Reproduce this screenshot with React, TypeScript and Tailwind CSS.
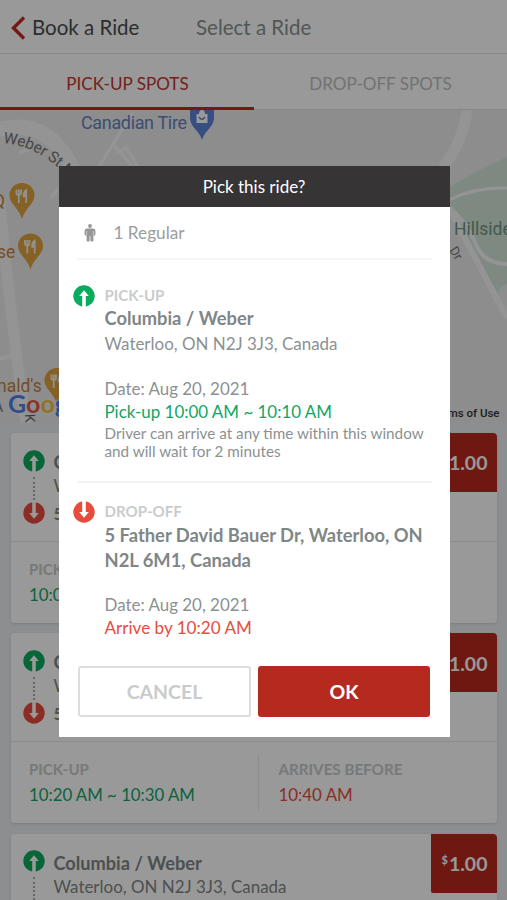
import { ReactNode } from 'react';

interface Ride {
  id: number;
  pickup: string;
  arrival: string;
  price: string;
}

const rides: Ride[] = [
  { id: 1, pickup: '10:00 AM ~ 10:10 AM', arrival: '10:20 AM', price: '1.00' },
  { id: 2, pickup: '10:20 AM ~ 10:30 AM', arrival: '10:40 AM', price: '1.00' },
  { id: 3, pickup: '10:40 AM ~ 10:50 AM', arrival: '11:00 AM', price: '1.00' },
];

function UpIcon() {
  return (
    <svg className="w-[22px] h-[22px] block shrink-0" viewBox="0 0 22 22">
      <circle cx="11" cy="11" r="10.7" fill="#0aab5c" />
      <path d="M11 5.2 L15.8 11 H12.8 V22 H9.2 V11 H6.2 Z" fill="#fff" />
    </svg>
  );
}

function DownIcon() {
  return (
    <svg className="w-[22px] h-[22px] block shrink-0" viewBox="0 0 22 22">
      <circle cx="11" cy="11" r="10.7" fill="#e84c3d" />
      <path d="M11 16.8 L6.2 11 H9.2 V0 H12.8 V11 H15.8 Z" fill="#fff" />
    </svg>
  );
}

function PersonIcon() {
  return (
    <svg className="w-[12px] h-[18px] block" viewBox="0 0 12 18">
      <circle cx="6" cy="2" r="1.9" fill="#969696" />
      <path d="M3.2 4.4 H8.8 Q11.4 4.4 11.4 7 V10.4 Q11.4 11.4 10.3 11.4 H9.4 V16.6 Q9.4 17.7 8 17.7 T6.4 16.6 V12 H5.6 V16.6 Q5.6 17.7 4.2 17.7 T2.6 16.6 V11.4 H1.7 Q.6 11.4 .6 10.4 V7 Q.6 4.4 3.2 4.4 Z" fill="#969696" />
      <path d="M2.7 7 V11.2 M9.3 7 V11.2" stroke="#fff" strokeWidth=".5" />
    </svg>
  );
}

function FoodPin({ x, y }: { x: number; y: number }) {
  return (
    <g transform={`translate(${x} ${y})`}>
      <path d="M0 36 C-3 25 -12.5 21 -12.5 12.2 A12.5 12.2 0 0 1 12.5 12.2 C12.5 21 3 25 0 36 Z" fill="#dea23f" />
      <path d="M-5.5 6.5 V10.5 Q-5.5 12 -3.2 12 T-1 10.5 V6.5 M-3.2 6.5 V20" stroke="#f4f0e8" strokeWidth="1.8" fill="none" />
      <path d="M4.2 20 V7 Q1.6 8 1.6 13.4 H4.2" stroke="#f4f0e8" strokeWidth="1.7" fill="#f4f0e8" />
    </g>
  );
}

function RideMap() {
  return (
    <svg className="w-full h-[313px] block" viewBox="0 110 507 313" fontFamily="Roboto, sans-serif">
      <rect y="110" width="507" height="313" fill="#ebebeb" />
      <path d="M449 187 Q476 171 507 157 V320 Q490 287 480 263 L449 215 Z" fill="#d3e7d8" />
      <path d="M492 303 Q497 290 507 283 V324 Z" fill="#ebebeb" />
      <g fill="none" stroke="#f7f7f7">
        <path d="M-4 130 Q34 120 57 145 Q74 163 86 202" strokeWidth="15" />
        <path d="M0 200 Q7 290 26 424" strokeWidth="11" />
        <path d="M0 359 L18 354" strokeWidth="4" />
        <path d="M133 112 L98 168 M112 143 L134 168 M116 153 L126 148 L139 168" strokeWidth="3.5" />
        <path d="M467 110 Q465 136 443 168" strokeWidth="11" />
        <path d="M449 200 Q474 187 507 188" strokeWidth="3" />
        <path d="M449 208 L507 318" strokeWidth="6" />
        <path d="M449 207 Q466 222 474 240 Q482 264 507 264" strokeWidth="4" />
        <path d="M19 153 L29 149 M51 198 L58 189" strokeWidth="4" />
      </g>
      <path id="weber" d="M3 143 Q42 146 72 182" fill="none" />
      <text fontSize="15.5" fill="#747474" letterSpacing="-.15">
        <textPath href="#weber">Weber St N</textPath>
      </text>
      <text x="81" y="128.5" fontSize="18" fill="#6683c0" textLength="106">Canadian Tire</text>
      <path d="M202 140 C199 130 190 127 190 118 V108 H214 V118 C214 127 205 130 202 140 Z" fill="#5b84d6" />
      <path d="M196.5 114 H207.5 V123 H196.5 Z M199 114 Q199 110 202 110 T205 114" fill="#fff" />
      <path d="M199 117 Q202 121.5 205 117" stroke="#5b84d6" fill="none" strokeWidth="1.4" />
      <g fill="#c4823f" fontSize="17.5">
        <text x="-7" y="207">Q</text>
        <text x="-3" y="258">se</text>
        <text x="-3" y="392">nald's</text>
      </g>
      <FoodPin x={22} y={183} />
      <FoodPin x={30.5} y={233.5} />
      <FoodPin x={57} y={368} />
      <text x="454" y="235" fontSize="17.5" fill="#6f9581">Hillside</text>
      <text x="449" y="250" fontSize="13" fill="#777" transform="rotate(58 449 250)">Dr</text>
      <text x="-6" y="412" fontSize="14" fill="#777">A</text>
      <text x="25" y="414" fontSize="14" fill="#666" transform="rotate(88 25 414)">K</text>
      <text x="8" y="413" fontSize="25" fontFamily="Lato, sans-serif" fontWeight="700" strokeWidth="1.5" stroke="#f5f5f5" paintOrder="stroke">
        <tspan fill="#4f82e8">G</tspan>
        <tspan fill="#e2574c">o</tspan>
        <tspan fill="#f2bd42">o</tspan>
        <tspan fill="#4f82e8">g</tspan>
        <tspan fill="#58a65c">l</tspan>
        <tspan fill="#e2574c">e</tspan>
      </text>
      <text x="499.5" y="417" textAnchor="end" fontSize="11.5" fill="#333" fontWeight="500">Terms of Use</text>
    </svg>
  );
}

function RideCard({ ride }: { ride: Ride }) {
  return (
    <div className="h-[190px] shrink-0 bg-white rounded-[3px] shadow-sm">
      <div className="h-[109px] flex border-b border-[#e6e9eb]">
        <div className="w-[43px] pl-[12px] pt-[16.5px]">
          <UpIcon />
          <div className="ml-[10px] mt-[5px] mb-[2px] h-[23px] border-l-2 border-dotted border-[#a8a8a8]" />
          <DownIcon />
        </div>
        <div className="flex-1 pt-[17px] text-[#7f8686]">
          <div className="text-[18.2px] leading-[24px] font-bold whitespace-nowrap">Columbia / Weber</div>
          <div className="text-[16.95px] leading-[24px] whitespace-nowrap">Waterloo, ON N2J 3J3, Canada</div>
          <div className="mt-[4px] text-[16.95px] leading-[24px] font-bold whitespace-nowrap">5 Father David Bauer Dr</div>
        </div>
        <div className="w-[66px] h-[59px] pt-px bg-[#b9291f] rounded-tr-[4px] rounded-bl-[2px] flex items-center justify-center pl-[2px] text-white font-bold">
          <span className="text-[11px] mb-[8px] mr-px">$</span>
          <span className="text-[19.5px]">{ride.price}</span>
        </div>
      </div>
      <div className="h-[81px] flex items-center">
        <div className="w-[248px] h-[54px] pl-[18.5px] pb-px border-r border-[#e6e9eb] flex flex-col justify-center">
          <div className="text-[15.1px] leading-[25px] font-bold text-[#c6caca]">PICK-UP</div>
          <div className="text-[16.8px] leading-[25px] text-[#12a566]">{ride.pickup}</div>
        </div>
        <div className="h-[54px] pl-[20px] pb-px flex flex-col justify-center">
          <div className="text-[15.2px] leading-[25px] font-bold text-[#c6caca]">ARRIVES BEFORE</div>
          <div className="text-[16.9px] leading-[25px] text-[#e84c3d]">{ride.arrival}</div>
        </div>
      </div>
    </div>
  );
}

function Stop({ icon, label, children }: { icon: ReactNode; label: string; children: ReactNode }) {
  return (
    <div className="flex">
      <div className="w-[31.5px] shrink-0">{icon}</div>
      <div className="flex-1 whitespace-nowrap">
        <div className="text-[15.1px] leading-[20px] font-bold text-[#c9cccd]">{label}</div>
        {children}
      </div>
    </div>
  );
}

function ConfirmDialog() {
  return (
    <div className="ml-px w-[391px] h-[571px] bg-white flex flex-col">
      <div className="h-[41px] pt-px bg-[#373435] text-white text-[17px] flex items-center justify-center">Pick this ride?</div>
      <div className="h-[53px] mx-[18px] border-b-2 border-[#f5f6f6] flex items-center pl-[7.5px]">
        <PersonIcon />
        <span className="ml-[17.5px] mt-px text-[17.2px] text-[#9a9d9e]">1 Regular</span>
      </div>

      <div className="h-[223px] mx-[18px] border-b-2 border-[#f1f4f5] pt-[24.5px] text-[16.95px] text-[#8b9192]">
        <div className="-ml-[3.5px]">
          <Stop icon={<UpIcon />} label="PICK-UP">
            <div className="text-[18.3px] leading-[26px] font-bold text-[#7f8686]">Columbia / Weber</div>
            <div className="leading-[26px]">Waterloo, ON N2J 3J3, Canada</div>
            <div className="mt-[20.5px] leading-[23px]">Date: Aug 20, 2021</div>
            <div className="leading-[23px] text-[#12a566]">Pick-up 10:00 AM ~ 10:10 AM</div>
            <div className="mt-[0.5px] text-[15.25px] leading-[18.5px]">
              Driver can arrive at any time within this window<br />and will wait for 2 minutes
            </div>
          </Stop>
        </div>
      </div>

      <div className="h-[183px] mx-[18px] pt-[17.5px] text-[16.95px] text-[#8b9192]">
        <div className="-ml-[3.5px]">
          <Stop icon={<DownIcon />} label="DROP-OFF">
            <div className="mt-[2px] text-[18.35px] leading-[25px] font-bold text-[#7f8686]">
              5 Father David Bauer Dr, Waterloo, ON<br />N2L 6M1, Canada
            </div>
            <div className="mt-[20px] leading-[23px]">Date: Aug 20, 2021</div>
            <div className="leading-[23px] text-[17.1px] text-[#e84c3d]">Arrive by 10:20 AM</div>
          </Stop>
        </div>
      </div>

      <div className="flex justify-between pl-[19.5px] pr-[19.5px]">
        <button className="w-[173px] h-[51px] border-2 border-[#dcdede] rounded-[3px] text-[19.5px] font-bold text-[#c9cccd]">CANCEL</button>
        <button className="w-[172px] h-[51px] bg-[#b6291e] rounded-[3px] text-[19.5px] font-bold text-white">OK</button>
      </div>
    </div>
  );
}

export default function App() {
  return (
    <div className="relative w-[507px] h-[900px] overflow-hidden bg-[#e9edf0] font-['Lato',sans-serif]">
      {/* Header */}
      <div className="h-[54px] pt-[2px] bg-white border-b border-[#dfe2e3] flex items-center">
        <svg className="w-[16px] h-[26px] ml-[10px]" viewBox="0 0 16 26" fill="none">
          <path d="M14 2.5 L3.5 13 L14 23.5" stroke="#c3281e" strokeWidth="3.4" />
        </svg>
        <span className="ml-[6px] w-[164px] text-[20.5px] text-[#4a4d4e]">Book a Ride</span>
        <span className="text-[20.5px] text-[#8a8f90]">Select a Ride</span>
      </div>

      {/* Tabs */}
      <div className="h-[56px] bg-white flex text-[17.1px]">
        <div className="w-[254px] pt-[6px] pl-px border-b-[3px] border-[#c3281e] text-[#c3352d] flex items-center justify-center">PICK-UP SPOTS</div>
        <div className="w-[253px] border-b border-[#dfe2e3] text-[#bcc0c0] flex items-center justify-center pt-[4px]">DROP-OFF SPOTS</div>
      </div>

      <RideMap />

      <div className="px-[10.5px] pt-[10px] flex flex-col gap-[10.4px]">
        {rides.map(ride => (
          <RideCard key={ride.id} ride={ride} />
        ))}
      </div>

      {/* Dialog over the dimmed page */}
      <div className="absolute inset-0 bg-black/40 flex justify-center items-start pt-[166px]">
        <ConfirmDialog />
      </div>
    </div>
  );
}
